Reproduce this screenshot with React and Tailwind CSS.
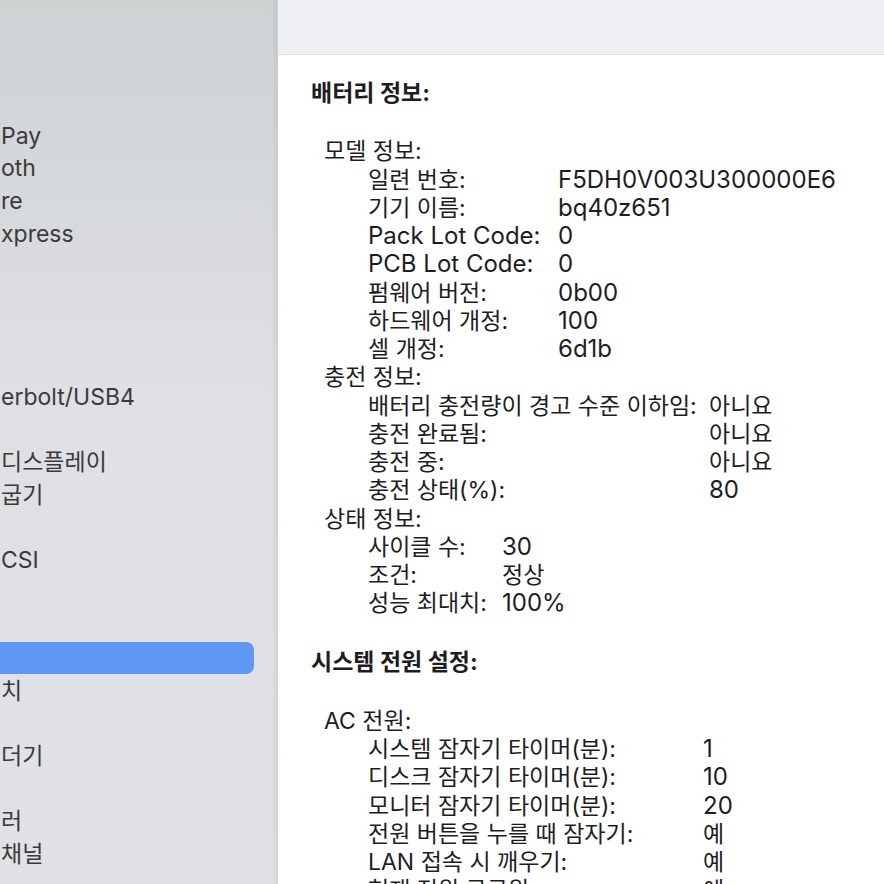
import React from "react";

const FONT = "font-['Inter','Noto_Sans_CJK_KR',sans-serif]";

const sideRows = [
  "Pay", "oth", "re", "xpress", "", "", "", "", "erbolt/USB4", "",
  "디스플레이", "굽기", "", "CSI", "", "", "__sel__", "치", "", "더기", "", "러", "채널", "",
];

const batteryGroups = [
  {
    title: "모델 정보:",
    w: "w-[190px]",
    rows: [
      ["일련 번호:", "F5DH0V003U300000E6"],
      ["기기 이름:", "bq40z651"],
      ["Pack Lot Code:", "0"],
      ["PCB Lot Code:", "0"],
      ["펌웨어 버전:", "0b00"],
      ["하드웨어 개정:", "100"],
      ["셀 개정:", "6d1b"],
    ],
  },
  {
    title: "충전 정보:",
    w: "w-[341px]",
    rows: [
      ["배터리 충전량이 경고 수준 이하임:", "아니요"],
      ["충전 완료됨:", "아니요"],
      ["충전 중:", "아니요"],
      ["충전 상태(%):", "80"],
    ],
  },
  {
    title: "상태 정보:",
    w: "w-[134px]",
    rows: [
      ["사이클 수:", "30"],
      ["조건:", "정상"],
      ["성능 최대치:", "100%"],
    ],
  },
];

const acGroup = {
  title: "AC 전원:",
  w: "w-[335px]",
  rows: [
    ["시스템 잠자기 타이머(분):", "1"],
    ["디스크 잠자기 타이머(분):", "10"],
    ["모니터 잠자기 타이머(분):", "20"],
    ["전원 버튼을 누를 때 잠자기:", "예"],
    ["LAN 접속 시 깨우기:", "예"],
    ["현재 전원 공급원:", "예"],
  ],
};

const isLatin = (s) => /^[\x00-\x7F]+$/.test(s);

function T({ s, className = "" }) {
  return <span className={`${className} ${isLatin(s) ? "text-[24px]" : ""}`}>{s}</span>;
}

function Group({ g }) {
  return (
    <div>
      <div>{g.title}</div>
      <div className="pl-[44px]">
        {g.rows.map(([k, v], i) => (
          <div key={i} className="flex">
            <T s={k} className={`${g.w} shrink-0`} />
            <T s={v} />
          </div>
        ))}
      </div>
    </div>
  );
}

export default function App() {
  return (
    <div className={`flex w-[884px] h-[884px] overflow-hidden ${FONT}`}>
      <aside className="w-[278px] shrink-0 h-full bg-linear-to-b from-[#cdd2d3] via-[#dfe0e4] via-45% to-[#e1e2e6] border-r border-[#d0d1d4] shadow-[inset_-6px_0_5px_-4px_rgba(0,0,0,0.07)] pt-[119.6px] text-[23px] text-[#3a3a3c]">
        {sideRows.map((t, i) =>
          t === "__sel__" ? (
            <div key={i} className="h-[32.65px] flex items-center">
              <div className="w-[254px] h-[32px] rounded-r-[8px] bg-[#5f97f4]" />
            </div>
          ) : (
            <div key={i} className="h-[32.65px] flex items-center whitespace-nowrap pl-[1px]">
              {t}
            </div>
          )
        )}
      </aside>
      <main className="flex-1 h-full flex flex-col bg-white">
        <header className="h-[55px] shrink-0 bg-[#eff0f4] border-b border-[#dedfe2]" />
        <div className="pl-[33px] pt-[24px] text-[23px] leading-[28.25px] text-[#1d1d1f] whitespace-nowrap">
          <div className="font-bold">배터리 정보:</div>
          <div className="mt-[30px] pl-[13px]">
            {batteryGroups.map((g, i) => (
              <Group key={i} g={g} />
            ))}
          </div>
          <div className="mt-[30px] font-bold">시스템 전원 설정:</div>
          <div className="mt-[31px] pl-[13px]">
            <Group g={acGroup} />
          </div>
        </div>
      </main>
    </div>
  );
}
